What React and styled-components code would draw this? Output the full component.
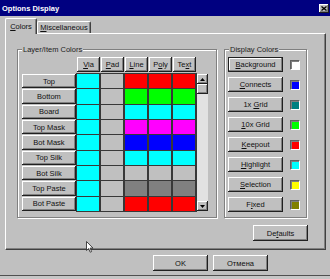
import React from 'react';
import styled, { createGlobalStyle } from 'styled-components';

const GlobalStyle = createGlobalStyle`
  html, body { margin: 0; padding: 0; background: #c0c0c0; }
  body {
    font-family: "Liberation Sans", Arial, sans-serif;
    font-size: 7.5px;
    color: #101010;
  }
  * { box-sizing: border-box; }
`;

const raised = `
  background: #c0c0c0;
  box-shadow: inset -1px -1px #202020, inset 1px 1px #fff, inset -2px -2px #808080;
`;

const Window = styled.div`
  position: relative;
  width: 330px;
  height: 279px;
  overflow: hidden;
  background: #c0c0c0;
  display: flex;
  flex-direction: column;
`;

const TitleBar = styled.div`
  height: 16px;
  background: #000080;
  color: #fff;
  font-weight: bold;
  font-size: 7.5px;
  display: flex;
  align-items: center;
  justify-content: space-between;
  padding: 0 1px 0 2px;
`;

const CloseBtn = styled.div`
  ${raised}
  width: 10px;
  height: 9px;
  display: flex;
  align-items: center;
  justify-content: center;
`;

const TabStrip = styled.div`
  display: flex;
  align-items: flex-end;
  height: 15px;
  margin-top: 2px;
  padding-left: 5px;
`;

const Tab = styled.div`
  position: relative;
  z-index: 1;
  width: ${p => p.$w}px;
  height: ${p => (p.$active ? 16 : 12)}px;
  margin-bottom: ${p => (p.$active ? -1 : 0)}px;
  background: #c0c0c0;
  border-top: 1px solid #fff;
  border-left: 1px solid #fff;
  border-right: 1px solid #404040;
  box-shadow: inset -1px 0 #808080;
  border-radius: 2px 2px 0 0;
  display: flex;
  align-items: center;
  justify-content: center;
  padding-bottom: ${p => (p.$active ? 1 : 0)}px;
`;

const U = styled.span`
  text-decoration: underline;
`;

const Panel = styled.div`
  margin-left: 5px;
  width: 321px;
  height: 217px;
  border-top: 1px solid #fff;
  border-left: 1px solid #fff;
  border-right: 1px solid #404040;
  border-bottom: 1px solid #404040;
  box-shadow: inset -1px -1px #808080;
  padding: 15px 0 0 11px;
  display: flex;
  flex-direction: column;
`;

const GroupsRow = styled.div`
  display: flex;
  gap: 7px;
`;

const Group = styled.div`
  position: relative;
  width: ${p => p.$w}px;
  height: 169px;
  border: 1px solid #808080;
  box-shadow: 1px 1px 0 #fff, inset 1px 1px 0 #fff;
  padding: ${p => p.$pad};
`;

const Legend = styled.span`
  position: absolute;
  top: -5px;
  left: 4px;
  padding: 0 1px;
  line-height: 9px;
  background: #c0c0c0;
  color: #202020;
`;

const LayerGrid = styled.div`
  display: grid;
  grid-template-columns: 54px 121px 11px;
  grid-template-rows: 15px 139px;
  row-gap: 1px;
`;

const HeaderRow = styled.div`
  grid-column: 2;
  grid-row: 1;
  display: grid;
  grid-template-columns: repeat(5, 23px);
  column-gap: 1px;
  padding-left: 1px;
`;

const HeaderBtn = styled.div`
  ${raised}
  height: 15px;
  display: flex;
  align-items: center;
  justify-content: center;
`;

const LabelCol = styled.div`
  grid-column: 1;
  grid-row: 2;
  display: flex;
  flex-direction: column;
  gap: 1px;
  padding: 1px 0;
`;

const LabelBtn = styled.div`
  ${raised}
  flex: 1;
  display: flex;
  align-items: center;
  justify-content: center;
`;

const CellGrid = styled.div`
  grid-column: 2;
  grid-row: 2;
  background: #383838;
  display: grid;
  grid-template-columns: repeat(5, 22px);
  grid-template-rows: repeat(9, 1fr);
  column-gap: 2px;
  row-gap: 1px;
  padding: 1px 2px 1px 1px;
`;

const Cell = styled.div`
  background: ${p => p.$c};
`;

const Scrollbar = styled.div`
  grid-column: 3;
  grid-row: 2;
  margin: 1px 0;
  width: 11px;
  display: flex;
  flex-direction: column;
  background: #e2e2e2;
`;

const ScrollBtn = styled.div`
  ${raised}
  height: 10px;
  display: flex;
  align-items: center;
  justify-content: center;
`;

const Spacer = styled.div`
  flex: 1;
`;

const DisplayList = styled.div`
  display: flex;
  flex-direction: column;
  gap: 5px;
`;

const DisplayRow = styled.div`
  display: flex;
  align-items: center;
  gap: 7px;
  height: 15px;
`;

const Btn = styled.div`
  background: #c0c0c0;
  box-shadow: ${p =>
    p.$default
      ? 'inset 0 0 0 1px #202020, inset -2px -2px #808080, inset 2px 2px #fff'
      : 'inset -1px -1px #202020, inset 1px 1px #fff, inset -2px -2px #808080'};
  width: 55px;
  height: ${p => p.$h || 15}px;
  display: flex;
  align-items: center;
  justify-content: center;
`;

const Swatch = styled.div`
  width: 10px;
  height: 10px;
  background: ${p => p.$c};
  border: 1px solid;
  border-color: #606060 #fff #fff #606060;
  box-shadow: inset 1px 1px #808080;
`;

const DefaultsRow = styled.div`
  display: flex;
  justify-content: flex-end;
  padding-right: 17px;
  margin-top: 7px;
`;

const Footer = styled.div`
  display: flex;
  gap: 5px;
  padding-left: 153px;
  margin-top: 5px;
`;

const BottomEdge = styled.div`
  margin-top: 4px;
  flex: 1;
  border-top: 1px solid #505050;
  background: #c6c6c6;
`;

const Cursor = styled.svg`
  position: absolute;
  left: 86px;
  top: 241px;
`;

const CY = '#00ffff';
const GR = '#c0c0c0';
const rows = [
  ['Top', '#ff0000'],
  ['Bottom', '#00ff00'],
  ['Board', '#00ffff'],
  ['Top Mask', '#ff00ff'],
  ['Bot Mask', '#0000ff'],
  ['Top Silk', '#00ffff'],
  ['Bot Silk', '#c0c0c0'],
  ['Top Paste', '#808080'],
  ['Bot Paste', '#ff0000'],
];

const display = [
  [<><U>B</U>ackground</>, '#ffffff', true],
  [<><U>C</U>onnects</>, '#0000ff'],
  [<>1x <U>G</U>rid</>, '#008080'],
  [<><U>1</U>0x Grid</>, '#00ff00'],
  [<><U>K</U>eepout</>, '#ff0000'],
  [<><U>H</U>ighlight</>, '#00ffff'],
  [<><U>S</U>election</>, '#ffff00'],
  [<>F<U>i</U>xed</>, '#808000'],
];

const Arrow = ({ up }) => (
  <svg width="5" height="3" viewBox="0 0 5 3">
    <polygon points={up ? '2.5,0 5,3 0,3' : '0,0 5,0 2.5,3'} fill="#000" />
  </svg>
);

export default function App() {
  return (
    <>
      <GlobalStyle />
      <Window>
        <TitleBar>
          <span>Options Display</span>
          <CloseBtn>
            <svg width="6" height="5" viewBox="0 0 6 5">
              <path d="M0.5 0.5 L5.5 4.5 M5.5 0.5 L0.5 4.5" stroke="#000" strokeWidth="1.3" />
            </svg>
          </CloseBtn>
        </TitleBar>
        <TabStrip>
          <Tab $active $w={32}><span><U>C</U>olors</span></Tab>
          <Tab $w={54}><span><U>M</U>iscellaneous</span></Tab>
        </TabStrip>
        <Panel>
          <GroupsRow>
            <Group $w={200} $pad="7px 0 0 4px">
              <Legend>Layer/Item Colors</Legend>
              <LayerGrid>
                <HeaderRow>
                  <HeaderBtn><span><U>V</U>ia</span></HeaderBtn>
                  <HeaderBtn><span><U>P</U>ad</span></HeaderBtn>
                  <HeaderBtn><span><U>L</U>ine</span></HeaderBtn>
                  <HeaderBtn><span>P<U>o</U>ly</span></HeaderBtn>
                  <HeaderBtn><span>Te<U>x</U>t</span></HeaderBtn>
                </HeaderRow>
                <LabelCol>
                  {rows.map(([name]) => (
                    <LabelBtn key={name}>{name}</LabelBtn>
                  ))}
                </LabelCol>
                <CellGrid>
                  {rows.map(([name, c]) => (
                    <React.Fragment key={name}>
                      <Cell $c={CY} />
                      <Cell $c={GR} />
                      <Cell $c={c} />
                      <Cell $c={c} />
                      <Cell $c={c} />
                    </React.Fragment>
                  ))}
                </CellGrid>
                <Scrollbar>
                  <ScrollBtn><Arrow up /></ScrollBtn>
                  <ScrollBtn />
                  <Spacer />
                  <ScrollBtn><Arrow /></ScrollBtn>
                </Scrollbar>
              </LayerGrid>
            </Group>
            <Group $w={83} $pad="7px 0 0 3px">
              <Legend>Display Colors</Legend>
              <DisplayList>
                {display.map(([label, c, def], i) => (
                  <DisplayRow key={i}>
                    <Btn $default={def}><span>{label}</span></Btn>
                    <Swatch $c={c} />
                  </DisplayRow>
                ))}
              </DisplayList>
            </Group>
          </GroupsRow>
          <DefaultsRow>
            <Btn $h={16}><span>De<U>f</U>aults</span></Btn>
          </DefaultsRow>
        </Panel>
        <Footer>
          <Btn $h={16}>OK</Btn>
          <Btn $h={16}>Отмена</Btn>
        </Footer>
        <BottomEdge />
        <Cursor width="8" height="12" viewBox="0 0 8 12">
          <path d="M0.5 0.5 L0.5 9.5 L2.6 7.6 L4.2 11.2 L5.6 10.6 L4.1 7.1 L7 7.1 Z" fill="#fff" stroke="#333" strokeWidth="0.9" />
        </Cursor>
      </Window>
    </>
  );
}
